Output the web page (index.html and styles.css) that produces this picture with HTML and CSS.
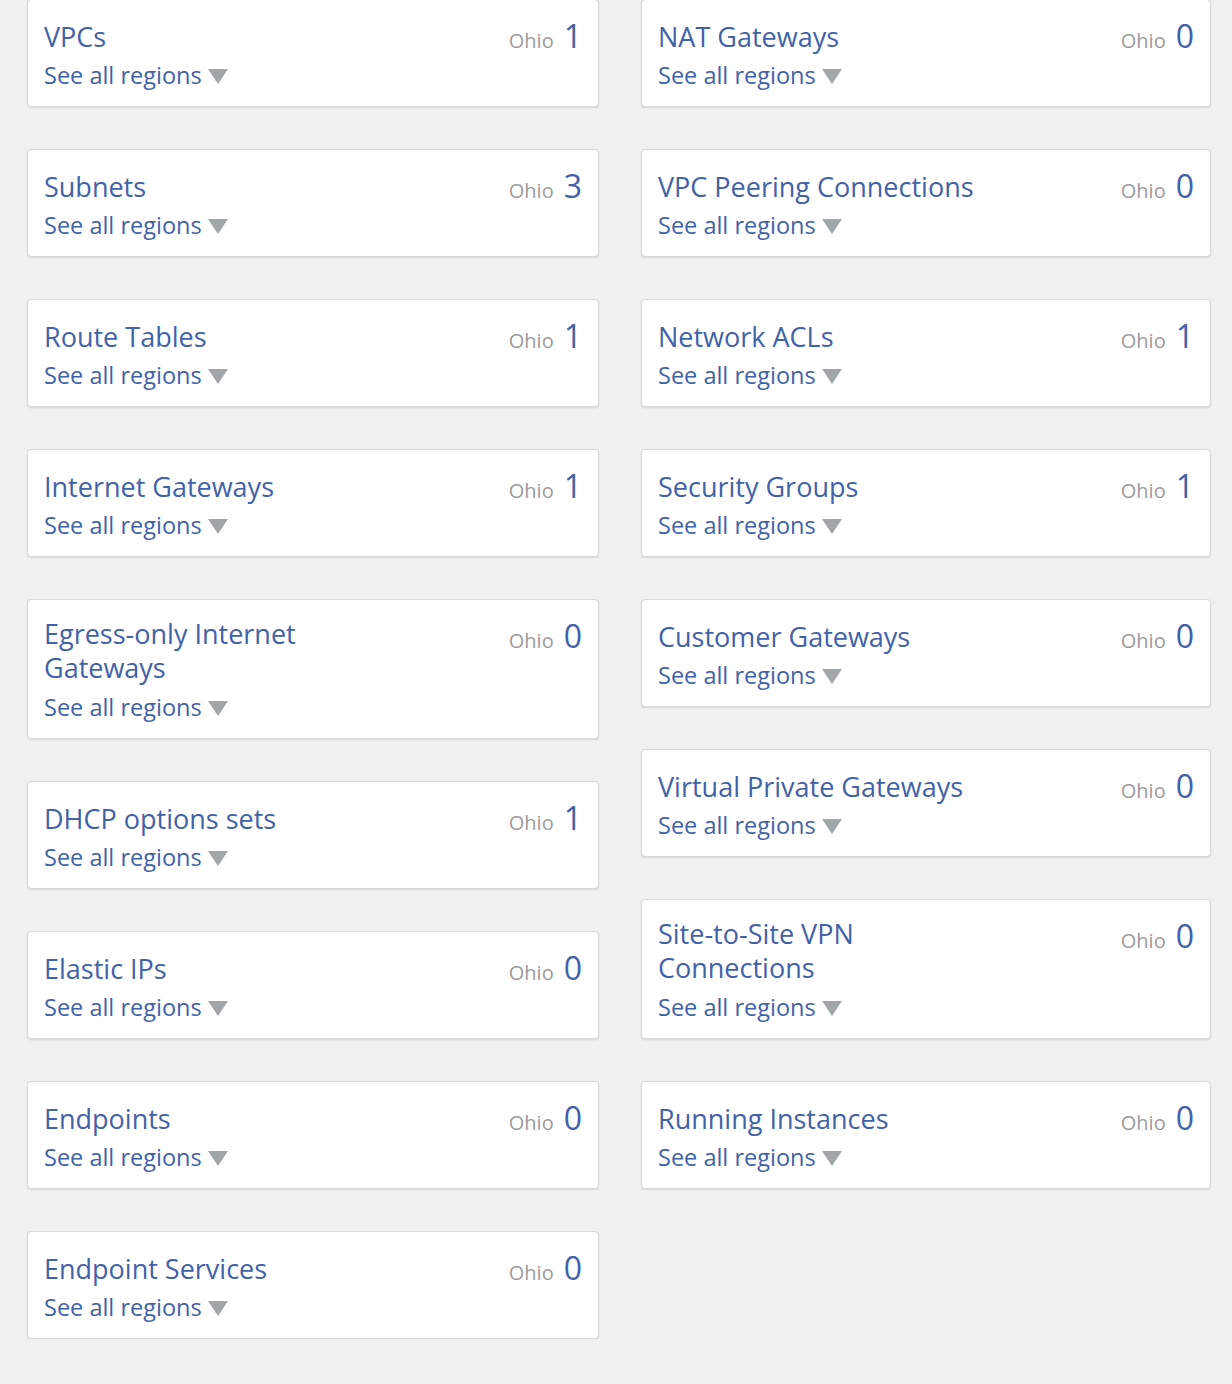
FILE: index.html
```html
<!DOCTYPE html>
<html lang="en">
<head>
<meta charset="utf-8">
<title>VPC Dashboard resources</title>
<link rel="stylesheet" href="styles.css">
</head>
<body>
<div class="board">
  <div class="column column-left">
    <div class="card"><div class="info"><a class="title">VPCs</a><a class="regions">See all regions<span class="caret"></span></a></div><div class="count"><span class="region">Ohio</span><span class="num">1</span></div></div>
    <div class="card"><div class="info"><a class="title">Subnets</a><a class="regions">See all regions<span class="caret"></span></a></div><div class="count"><span class="region">Ohio</span><span class="num">3</span></div></div>
    <div class="card"><div class="info"><a class="title">Route Tables</a><a class="regions">See all regions<span class="caret"></span></a></div><div class="count"><span class="region">Ohio</span><span class="num">1</span></div></div>
    <div class="card"><div class="info"><a class="title">Internet Gateways</a><a class="regions">See all regions<span class="caret"></span></a></div><div class="count"><span class="region">Ohio</span><span class="num">1</span></div></div>
    <div class="card"><div class="info"><a class="title two-line">Egress-only Internet Gateways</a><a class="regions">See all regions<span class="caret"></span></a></div><div class="count"><span class="region">Ohio</span><span class="num">0</span></div></div>
    <div class="card"><div class="info"><a class="title">DHCP options sets</a><a class="regions">See all regions<span class="caret"></span></a></div><div class="count"><span class="region">Ohio</span><span class="num">1</span></div></div>
    <div class="card"><div class="info"><a class="title">Elastic IPs</a><a class="regions">See all regions<span class="caret"></span></a></div><div class="count"><span class="region">Ohio</span><span class="num">0</span></div></div>
    <div class="card"><div class="info"><a class="title">Endpoints</a><a class="regions">See all regions<span class="caret"></span></a></div><div class="count"><span class="region">Ohio</span><span class="num">0</span></div></div>
    <div class="card"><div class="info"><a class="title">Endpoint Services</a><a class="regions">See all regions<span class="caret"></span></a></div><div class="count"><span class="region">Ohio</span><span class="num">0</span></div></div>
  </div>
  <div class="column column-right">
    <div class="card"><div class="info"><a class="title">NAT Gateways</a><a class="regions">See all regions<span class="caret"></span></a></div><div class="count"><span class="region">Ohio</span><span class="num">0</span></div></div>
    <div class="card"><div class="info"><a class="title">VPC Peering Connections</a><a class="regions">See all regions<span class="caret"></span></a></div><div class="count"><span class="region">Ohio</span><span class="num">0</span></div></div>
    <div class="card"><div class="info"><a class="title">Network ACLs</a><a class="regions">See all regions<span class="caret"></span></a></div><div class="count"><span class="region">Ohio</span><span class="num">1</span></div></div>
    <div class="card"><div class="info"><a class="title">Security Groups</a><a class="regions">See all regions<span class="caret"></span></a></div><div class="count"><span class="region">Ohio</span><span class="num">1</span></div></div>
    <div class="card"><div class="info"><a class="title">Customer Gateways</a><a class="regions">See all regions<span class="caret"></span></a></div><div class="count"><span class="region">Ohio</span><span class="num">0</span></div></div>
    <div class="card"><div class="info"><a class="title">Virtual Private Gateways</a><a class="regions">See all regions<span class="caret"></span></a></div><div class="count"><span class="region">Ohio</span><span class="num">0</span></div></div>
    <div class="card"><div class="info"><a class="title two-line">Site-to-Site VPN Connections</a><a class="regions">See all regions<span class="caret"></span></a></div><div class="count"><span class="region">Ohio</span><span class="num">0</span></div></div>
    <div class="card"><div class="info"><a class="title">Running Instances</a><a class="regions">See all regions<span class="caret"></span></a></div><div class="count"><span class="region">Ohio</span><span class="num">0</span></div></div>
  </div>
</div>
</body>
</html>
```
FILE: styles.css
```css
html, body {
  margin: 0;
  padding: 0;
  background: #f1f1f1;
}
body {
  font-family: "Open Sans", "Liberation Sans", sans-serif;
  overflow: hidden;
}
.board {
  display: flex;
  align-items: flex-start;
  gap: 42px;
  padding: 0 21px 0 27px;
  margin-top: -1px;
}
.column {
  display: flex;
  flex-direction: column;
  gap: 42px;
}
.column-left { width: 572px; }
.column-right { width: 570px; }
.card {
  display: flex;
  justify-content: space-between;
  align-items: flex-start;
  background: #fff;
  border: 1px solid #d9d9d9;
  border-radius: 4px;
  box-shadow: 0 1px 2px rgba(0, 0, 0, 0.12);
  padding: 17px 17px 16px 16px;
}
.info {
  display: flex;
  flex-direction: column;
  align-items: flex-start;
  gap: 9px;
  max-width: 330px;
}
.title {
  color: #4262a8;
  font-size: 27px;
  line-height: 34px;
  margin-top: 3px;
  margin-bottom: -3px;
}
.title.two-line {
  margin-top: 0;
  margin-bottom: -2px;
}
.regions {
  display: flex;
  align-items: center;
  color: #4262a8;
  font-size: 23.5px;
  line-height: 30px;
}
.caret {
  width: 0;
  height: 0;
  margin-left: 6px;
  margin-top: 2px;
  border-left: 10px solid transparent;
  border-right: 10px solid transparent;
  border-top: 15px solid #a1a7a8;
}
.count {
  display: flex;
  align-items: baseline;
  gap: 10px;
  margin-top: -1px;
  margin-right: -1px;
}
.region {
  color: #9b9b9b;
  font-size: 20px;
}
.num {
  color: #4262a8;
  font-size: 32px;
  line-height: 40px;
}
```
